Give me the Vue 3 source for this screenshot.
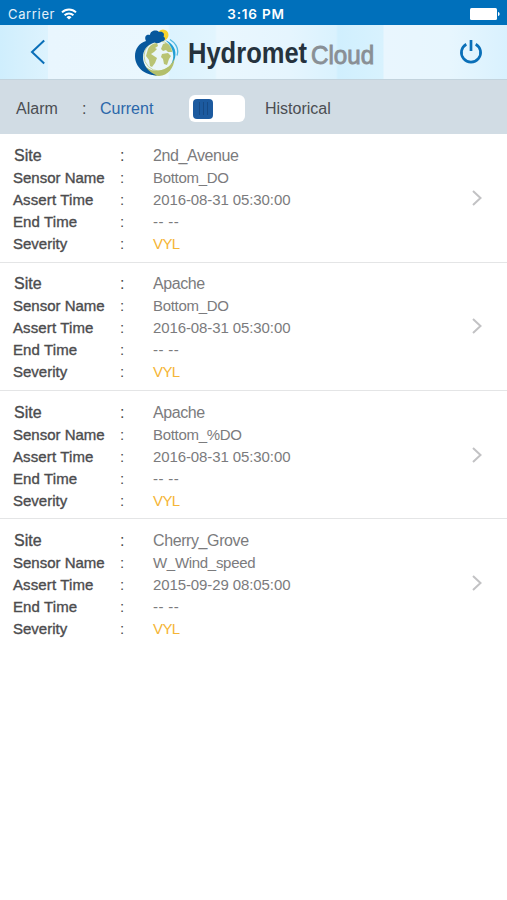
<script setup>
import { ref } from 'vue'

const historical = ref(false)

const alarms = [
  { site: '2nd_Avenue', sensor: 'Bottom_DO', assert: '2016-08-31 05:30:00', end: '-- --', severity: 'VYL' },
  { site: 'Apache', sensor: 'Bottom_DO', assert: '2016-08-31 05:30:00', end: '-- --', severity: 'VYL' },
  { site: 'Apache', sensor: 'Bottom_%DO', assert: '2016-08-31 05:30:00', end: '-- --', severity: 'VYL' },
  { site: 'Cherry_Grove', sensor: 'W_Wind_speed', assert: '2015-09-29 08:05:00', end: '-- --', severity: 'VYL' },
]

const fields = [
  { key: 'site', label: 'Site' },
  { key: 'sensor', label: 'Sensor Name' },
  { key: 'assert', label: 'Assert Time' },
  { key: 'end', label: 'End Time' },
  { key: 'severity', label: 'Severity' },
]
</script>

<template>
  <div class="screen">
    <div class="status">
      <div class="carrier">
        <span>Carrier</span>
        <svg class="wifi" width="16" height="12" viewBox="0 0 16 12" fill="none" stroke="#fff" stroke-width="2">
          <path d="M1 4.4a10 10 0 0 1 14 0" />
          <path d="M3.6 7.2a6.3 6.3 0 0 1 8.8 0" />
          <path d="M8 11.6 5.5 9.2a3.6 3.6 0 0 1 5 0z" fill="#fff" stroke="none" />
        </svg>
      </div>
      <span class="clock">3:16 PM</span>
      <svg class="battery" width="30" height="12" viewBox="0 0 30 12" fill="#fff">
        <rect x="0" y="0" width="27" height="12" rx="1.5" />
        <path d="M28 4c1.2.3 1.6 1 1.6 2s-.4 1.700-1.600 2z" />
      </svg>
    </div>

    <header class="header">
      <svg class="back" width="16" height="26" viewBox="0 0 16 26" fill="none" stroke="#0a6fb8" stroke-width="2">
        <path d="M14.200 1.500 2 13l12.200 11.500" />
      </svg>
      <svg class="logo" width="44" height="54" viewBox="0 0 44 54">
        <circle cx="24" cy="31" r="16" fill="#e9f6fa" />
        <circle cx="24" cy="31" r="15" fill="none" stroke="#c3d29a" stroke-width="1" />
        <circle cx="28" cy="10" r="5.500" fill="#f7d22e" />
        <path d="M30 15c8 3 12 10 10 18-1 3-2 5-4 7 2-4 3-8 2-12-1-6-4-10-8-13z" fill="#1f9ed6" />
        <path d="M35 14.500c6 4 9 10 7 16" fill="none" stroke="#53b9e2" stroke-width="1.300" />
        <path d="M8 37c3 7 9 9.500 16 8.500 7-1 13-5 15.500-12C39 43 33 50.500 24 51 15 51 9 45 8 37z" fill="#b3bf6b" />
        <g fill="#b9c474">
          <path d="M13 24c2-4 5-5.500 9-6l1 3-3 2 2 1-3 3-3 2 3 2 3 2-2 5-3 4-2-1-1-6-3-4z" />
          <path d="M28 19l3-1c4 2 6 6 6 9l-4 0-2-2-3 1-2-2z" />
          <path d="M27 29l6-1 3 3-2 3-2 6-3-1-1-5-2-2z" />
        </g>
        <path d="M11 16C9 12 11 9 15 10c0-4 6-6 9-3 4-1 6 2 4.500 4.500 3 2 1 5-2 5-2 2-5 2-7 1C12 20 8 25 8 32c0 8 5 15 14 18.500C9 50 0 42 0 31 0 24 4 18 11 16z" fill="#07589d" />
      </svg>
      <div class="wordmark">
        <span class="brand">Hydromet</span>
        <span class="suffix">Cloud</span>
      </div>
      <svg class="power" width="24" height="26" viewBox="0 0 24 26" fill="none" stroke="#0a6fb8" stroke-width="2.700">
        <path d="M7.300 5.200a9.600 9.600 0 1 0 9.400 0M12 1v11" />
      </svg>
    </header>

    <div class="filter">
      <span class="alarm">Alarm</span>
      <span class="sep">:</span>
      <span class="current">Current</span>
      <button class="toggle" :class="{ on: historical }" @click="historical = !historical">
        <span class="knob"><i></i><i></i><i></i></span>
      </button>
      <span class="hist">Historical</span>
    </div>

    <div class="list">
      <div v-for="(alarm, n) in alarms" :key="n" class="item">
        <div class="fields">
          <div v-for="f in fields" :key="f.key" class="row" :class="f.key">
            <span class="label">{{ f.label }}</span>
            <span class="colon">:</span>
            <span class="value">{{ alarm[f.key] }}</span>
          </div>
        </div>
        <svg class="chevron" width="12" height="18" viewBox="0 0 12 18" fill="none" stroke="#c2c2c4" stroke-width="2">
          <path d="M2 2l7.500 7L2 16" />
        </svg>
      </div>
    </div>
  </div>
</template>

<style>
body {
  background: #fff;
}
</style>

<style scoped>
.screen {
  width: 507px;
  height: 900px;
  overflow: hidden;
  background: #fff;
  font-family: "Liberation Sans", Arial, sans-serif;
}
.status {
  box-sizing: border-box;
  height: 25px;
  padding: 2px 7px 0 8px;
  display: grid;
  grid-template-columns: 1fr auto 1fr;
  align-items: center;
  background: #0070bb;
  color: #fff;
  font-family: Inter, sans-serif;
  font-size: 13px;
}
.carrier {
  display: flex;
  align-items: center;
  gap: 6px;
  letter-spacing: 0.65px;
  color: #e3f1fa;
}
.clock {
  font-weight: 600;
  font-size: 13.5px;
  letter-spacing: 0.8px;
  padding-left: 4px;
}
.battery {
  justify-self: end;
}
.header {
  box-sizing: border-box;
  height: 55px;
  border-bottom: 1px solid #c3d3dd;
  display: flex;
  align-items: center;
  padding: 0 24px 0 30px;
  background: linear-gradient(90deg, #cfeefd 0, #d8f1fd 30px, #ddf3fe 48px, #e9f6fe 48px, #eaf7fe 168px, #dcf3fe 170px, #e2f5fe 215px, #eaf7fe 217px, #e5f5fe 290px, #daf2fe 336px, #d0effe 338px, #d8f2fe 383px, #e9f6fe 384px, #e7f6fe 450px, #d9f1fe 507px);
}
.logo {
  margin-left: 89px;
}
.wordmark {
  width: 190px;
  margin-left: 9px;
  padding-top: 2px;
  display: grid;
  grid-template-columns: 123px 67px;
  align-items: baseline;
  line-height: 34px;
  white-space: nowrap;
}
.brand {
  width: max-content;
  font-size: 29px;
  font-weight: 700;
  color: #25323d;
  transform: scaleX(0.88);
  transform-origin: 0 0;
}
.suffix {
  width: max-content;
  font-size: 26px;
  color: #898f95;
  -webkit-text-stroke: 0.9px #898f95;
  transform: translateY(1px) scaleX(0.93);
  transform-origin: 0 0;
}
.power {
  margin-left: auto;
}
.filter {
  box-sizing: border-box;
  height: 54px;
  display: flex;
  align-items: center;
  padding: 3px 0 0 16px;
  background: #d1dce4;
  color: #4b4e52;
  font-size: 16px;
}
.alarm {
  width: 66px;
}
.sep {
  width: 18px;
}
.current {
  width: 89px;
  color: #2b67aa;
}
.toggle {
  box-sizing: border-box;
  width: 56px;
  height: 27px;
  margin: 0 20px 0 0;
  padding: 0 4px;
  border: 0;
  border-radius: 6px;
  background: #fff;
  display: flex;
  align-items: center;
}
.toggle.on {
  justify-content: flex-end;
}
.knob {
  width: 20px;
  height: 20px;
  border-radius: 4px;
  background: #1c5a9f;
  display: flex;
  align-items: center;
  justify-content: center;
  gap: 3px;
}
.knob i {
  width: 1px;
  height: 13px;
  background: #164a86;
}
.list {
  padding-top: 0.5px;
}
.item {
  box-sizing: border-box;
  height: 128.25px;
  border-bottom: 1px solid #e4e5e6;
  padding: 10.5px 24px 0 13px;
  display: flex;
  justify-content: space-between;
}
.item:last-child {
  border-bottom: 0;
}
.row {
  height: 22px;
  line-height: 22px;
  display: grid;
  grid-template-columns: 107px 33px auto;
  font-size: 15px;
  color: #4c4c4e;
  white-space: nowrap;
}
.row.site {
  font-size: 16px;
}
.label {
  -webkit-text-stroke: 0.35px #4c4c4e;
}
.site .label {
  padding-left: 1px;
}
.assert .label,
.end .label {
  letter-spacing: 0.12px;
}
.value {
  color: #7b7b7d;
  letter-spacing: -0.1px;
}
.site .value {
  letter-spacing: -0.4px;
}
.sensor .value {
  letter-spacing: -0.3px;
}
.end .value {
  letter-spacing: 0.4px;
}
.severity .value {
  color: #f5b536;
  letter-spacing: -0.6px;
}
.chevron {
  margin-top: 44px;
}
</style>
